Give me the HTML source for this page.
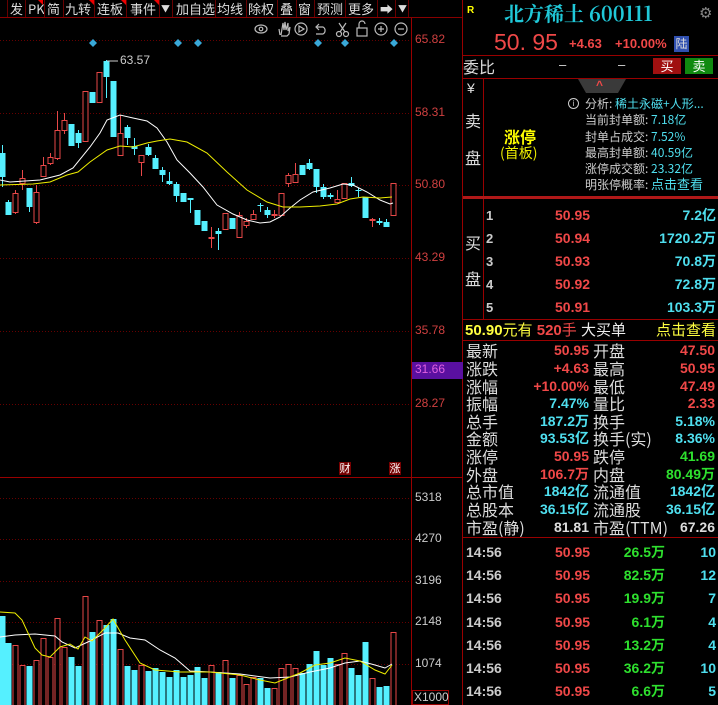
<!DOCTYPE html>
<html><head><meta charset="utf-8"><style>
*{margin:0;padding:0;box-sizing:border-box}
body{width:718px;height:705px;background:#000;overflow:hidden;position:relative;font-family:"Liberation Sans","Noto Sans CJK SC",sans-serif;color:#ddd}
.a{position:absolute;white-space:nowrap}
.tb{position:absolute;top:0;height:18px;font-size:13px;line-height:18px;color:#ddd;font-family:"Noto Sans CJK SC","Liberation Sans",sans-serif}
.sep{position:absolute;top:0;width:1px;height:18px;background:#600}
.tri{position:absolute;top:0;width:0;height:0;border-top:5px solid #e00;border-left:5px solid transparent}
.ax{position:absolute;left:415px;font-size:12px;color:#d04040}
.axw{position:absolute;left:415px;font-size:12px;color:#ccc}
.c{font-family:"Liberation Sans","Noto Sans CJK SC",sans-serif}
.lbl{position:absolute;left:466px;font-size:16px;color:#ddd;font-family:"Noto Sans CJK SC",sans-serif;line-height:18px}
.lbl2{position:absolute;left:593px;font-size:16px;color:#ddd;font-family:"Noto Sans CJK SC",sans-serif;line-height:18px}
.v1{position:absolute;right:129px;font-size:14px;font-weight:bold;line-height:18px}
.v2{position:absolute;right:3px;font-size:14px;font-weight:bold;line-height:18px}
.r{color:#f04848}.cy{color:#4fdfef}.g{color:#2ee02e}.y{color:#ffff40}.w{color:#ddd}
.info{position:absolute;left:585px;font-size:12px;color:#ccc;font-family:"Noto Sans CJK SC",sans-serif;line-height:16px}
</style></head><body>
<div class="sep" style="left:7px"></div>
<div class="tb" style="left:10px">发</div><div class="sep" style="left:25px"></div>
<div class="tb" style="left:28px">PK</div><div class="tri" style="left:38px"></div><div class="sep" style="left:44px"></div>
<div class="tb" style="left:47px">简</div><div class="sep" style="left:63px"></div>
<div class="tb" style="left:65px">九转</div><div class="tri" style="left:89px"></div><div class="sep" style="left:94px"></div>
<div class="tb" style="left:97px">连板</div><div class="tri" style="left:121px"></div><div class="sep" style="left:126px"></div>
<div class="tb" style="left:130px">事件</div><div class="tri" style="left:154px"></div><div class="sep" style="left:159px"></div>
<div class="tb" style="left:161px;font-size:9px">▼</div><div class="sep" style="left:172px"></div>
<div class="tb" style="left:176px">加自选</div><div class="sep" style="left:215px"></div>
<div class="tb" style="left:217px">均线</div><div class="sep" style="left:246px"></div>
<div class="tb" style="left:248px">除权</div><div class="sep" style="left:277px"></div>
<div class="tb" style="left:280px">叠</div><div class="sep" style="left:296px"></div>
<div class="tb" style="left:298px">窗</div><div class="sep" style="left:314px"></div>
<div class="tb" style="left:317px">预测</div><div class="sep" style="left:345px"></div>
<div class="tb" style="left:348px">更多</div><div class="sep" style="left:377px"></div>
<div class="tb" style="left:380px;font-weight:bold">➡</div><div class="sep" style="left:395px"></div>
<div class="tb" style="left:398px;font-size:9px">▼</div><div class="sep" style="left:408px"></div>
<div class="a" style="left:0;top:17px;width:463px;height:1px;background:#800"></div>

<svg class="a" style="left:0;top:0" width="463" height="705">
<g stroke="#600" stroke-dasharray="1,2" stroke-width="1">
<line x1="0" y1="40.5" x2="411" y2="40.5"/><line x1="0" y1="113.5" x2="411" y2="113.5"/><line x1="0" y1="185.5" x2="411" y2="185.5"/><line x1="0" y1="258.5" x2="411" y2="258.5"/><line x1="0" y1="331.5" x2="411" y2="331.5"/><line x1="0" y1="404.5" x2="411" y2="404.5"/>
<line x1="0" y1="498.5" x2="411" y2="498.5"/><line x1="0" y1="539.5" x2="411" y2="539.5"/><line x1="0" y1="581.5" x2="411" y2="581.5"/><line x1="0" y1="622.5" x2="411" y2="622.5"/><line x1="0" y1="664.5" x2="411" y2="664.5"/>
</g>
<line x1="411.5" y1="18" x2="411.5" y2="705" stroke="#900"/>
<line x1="0" y1="477.5" x2="463" y2="477.5" stroke="#900"/>
<line x1="462.5" y1="0" x2="462.5" y2="705" stroke="#900"/>
<g stroke="#bbb" fill="none" stroke-width="1.2">
<ellipse cx="261" cy="29" rx="6" ry="4"/><circle cx="261" cy="29" r="1.8"/>
<path d="M280 35 L279 29 M281 35 L283 23 L284 30 L285 22 L286 30 L288 23 L288 31 L290 27 L289 34 L287 36 L281 36"/>
<circle cx="301" cy="29" r="6"/><path d="M299 26 L304 29 L299 32Z"/>
<path d="M317 27 L323 27 A4 4 0 0 1 323 34 L316 34 M319 24 L316 27 L319 30"/>
<circle cx="339" cy="34" r="2.5"/><circle cx="346" cy="34" r="2.5"/><path d="M340 32 L346 23 M345 32 L339 23"/>
<rect x="357" y="28" width="10" height="8"/><path d="M359 28 L359 24 A3 3 0 0 1 365 24"/>
<circle cx="381" cy="29" r="6"/><path d="M378 29 L384 29 M381 26 L381 32"/>
<circle cx="401" cy="29" r="6"/><path d="M398 29 L404 29"/>
</g>
<g fill="#3aa8d8"><path d="M93 39l4 4-4 4-4-4z"/><path d="M178 39l4 4-4 4-4-4z"/><path d="M198 39l4 4-4 4-4-4z"/><path d="M318 39l4 4-4 4-4-4z"/><path d="M345 39l4 4-4 4-4-4z"/><path d="M394 39l4 4-4 4-4-4z"/></g>
<g id="cd"></g>
<polyline fill="none" stroke="#fff" stroke-width="1" points="0,180 10,182 40,180 60,175 73,168 90,147 100,133 107,120 120,115 133,118 147,121 157,128 167,142 177,160 190,173 203,187 217,205 233,214 247,220 260,223 270,222 280,217 290,208 300,200 313,192 330,188 343,184 353,185 367,192 380,200 390,204 393,203"/>
<polyline fill="none" stroke="#ee0" stroke-width="1" points="0,185 33,184 50,182 67,175 78,172 90,162 107,150 120,146 133,147 147,143 157,141 170,139 187,142 207,153 227,172 247,190 267,202 283,207 300,207 320,206 337,204 350,199 363,197 380,198 392,197"/>
<polyline fill="none" stroke="#fff" stroke-width="1" points="0,637 15,635 35,634 55,636 62,642 75,648 90,641 105,633 118,633 130,638 145,640 160,650 175,658 190,671 210,672 240,674 270,678 290,677 310,672 330,668 345,663 360,661 375,665 385,668 392,664"/>
<polyline fill="none" stroke="#ee0" stroke-width="1" points="0,612 15,613 22,620 35,648 42,655 50,657 60,647 70,644 78,649 85,637 92,641 105,628 113,619 125,640 140,663 155,670 180,672 210,672 240,675 260,680 275,683 300,673 315,665 330,663 345,658 360,661 375,670 385,674 392,665"/>
<line x1="107" y1="61" x2="118" y2="61" stroke="#ccc"/>
</svg>
<div class="a" style="left:120px;top:53px;font-size:12px;color:#ccc">63.57</div>

<div class="ax" style="top:32px">65.82</div>
<div class="ax" style="top:105px">58.31</div>
<div class="ax" style="top:177px">50.80</div>
<div class="ax" style="top:250px">43.29</div>
<div class="ax" style="top:323px">35.78</div>
<div class="a" style="left:412px;top:362px;width:51px;height:17px;background:#5a10a0"></div>
<div class="ax" style="top:362px;color:#e060e0">31.66</div>
<div class="ax" style="top:396px">28.27</div>
<div class="a" style="left:339px;top:462px;width:12px;height:13px;background:#700;color:#fff;font-size:11px;line-height:13px;text-align:center;font-family:'Noto Sans CJK SC'">财</div>
<div class="a" style="left:389px;top:462px;width:12px;height:13px;background:#700;color:#fff;font-size:11px;line-height:13px;text-align:center;font-family:'Noto Sans CJK SC'">涨</div>
<div class="axw" style="top:490px">5318</div>
<div class="axw" style="top:531px">4270</div>
<div class="axw" style="top:573px">3196</div>
<div class="axw" style="top:614px">2148</div>
<div class="axw" style="top:656px">1074</div>
<div class="a" style="left:412px;top:690px;width:37px;height:15px;border:1px solid #900;font-size:12px;color:#ccc;line-height:13px;padding-left:1px">X1000</div>

<div class="a" style="left:467px;top:5px;font-size:10px;font-weight:bold;color:#ff0">R</div>
<div class="a" style="left:504px;top:0px;font-size:20px;line-height:26px;font-weight:bold;color:#20c8d8;font-family:'Noto Serif CJK SC','Liberation Serif',serif">北方稀土 600111</div>
<div class="a" style="left:699px;top:4px;font-size:15px;color:#888">⚙</div>
<div class="a" style="left:494px;top:29px;font-size:23px;color:#f04848;font-family:'Liberation Sans',sans-serif">50. 95</div>
<div class="a" style="left:569px;top:36px;font-size:13px;font-weight:bold;color:#f04848">+4.63</div>
<div class="a" style="left:615px;top:36px;font-size:13px;font-weight:bold;color:#f04848">+10.00%</div>
<div class="a" style="left:674px;top:36px;width:15px;height:16px;background:#3050b0;color:#ddd;font-size:12px;line-height:16px;text-align:center;font-family:'Noto Sans CJK SC'">陆</div>
<div class="a" style="left:463px;top:55px;width:255px;height:1px;background:#900"></div>
<div class="a" style="left:463px;top:56px;font-size:16px;line-height:20px;color:#ddd;font-family:'Noto Sans CJK SC'">委比</div>
<div class="a" style="left:559px;top:57px;font-size:13px">–</div>
<div class="a" style="left:618px;top:57px;font-size:13px">–</div>
<div class="a" style="left:653px;top:58px;width:28px;height:16px;background:#a01010;color:#fff;font-size:13px;line-height:16px;text-align:center;font-family:'Noto Sans CJK SC'">买</div>
<div class="a" style="left:685px;top:58px;width:28px;height:16px;background:#108a10;color:#fff;font-size:13px;line-height:16px;text-align:center;font-family:'Noto Sans CJK SC'">卖</div>
<div class="a" style="left:463px;top:78px;width:255px;height:1px;background:#900"></div>
<div class="a" style="left:483px;top:78px;width:1px;height:242px;background:#900"></div>
<div class="a" style="left:467px;top:80px;font-size:14px;color:#ddd">¥</div>
<div class="a" style="left:465px;top:108px;font-size:16px;color:#ddd;font-family:'Noto Sans CJK SC'">卖</div>
<div class="a" style="left:465px;top:145px;font-size:16px;color:#ddd;font-family:'Noto Sans CJK SC'">盘</div>
<div class="a" style="left:578px;top:79px;width:48px;height:0;border-top:14px solid #3a3a3a;border-left:8px solid transparent;border-right:8px solid transparent"></div>
<div class="a" style="left:596px;top:78px;font-size:12px;color:#f04848;font-weight:bold">^</div>
<div class="a" style="left:504px;top:127px;font-size:16px;line-height:18px;font-weight:bold;color:#ff0;font-family:'Noto Sans CJK SC'">涨停</div>
<div class="a" style="left:500px;top:145px;font-size:14px;line-height:16px;color:#ee0;font-family:'Noto Sans CJK SC'">(首板)</div>
<div class="a" style="left:568px;top:98px;width:11px;height:11px;border:1px solid #ccc;border-radius:50%;font-size:8px;line-height:9px;text-align:center;color:#ccc">i</div>
<div class="info" style="top:96px">分析: <span class="cy">稀土永磁+人形...</span></div>
<div class="info" style="top:112px">当前封单额: <span class="cy">7.18亿</span></div>
<div class="info" style="top:129px">封单占成交: <span class="cy">7.52%</span></div>
<div class="info" style="top:145px">最高封单额: <span class="cy">40.59亿</span></div>
<div class="info" style="top:161px">涨停成交额: <span class="cy">23.32亿</span></div>
<div class="info" style="top:176px">明张停概率: <span class="cy" style="font-size:13px">点击查看</span></div>
<div class="a" style="left:463px;top:196px;width:255px;height:3px;background:#b01818"></div>
<div class="a" style="left:465px;top:230px;font-size:16px;color:#ddd;font-family:'Noto Sans CJK SC'">买</div>
<div class="a" style="left:465px;top:266px;font-size:16px;color:#ddd;font-family:'Noto Sans CJK SC'">盘</div>
<div class="a c" style="left:486px;top:204px;font-size:13px;font-weight:bold;line-height:23px;color:#ccc">1<br>2<br>3<br>4<br>5</div>
<div class="a c r" style="left:555px;top:204px;font-size:14px;font-weight:bold;line-height:23px">50.95<br>50.94<br>50.93<br>50.92<br>50.91</div>
<div class="a c cy" style="right:2px;top:204px;font-size:14px;font-weight:bold;line-height:23px;text-align:right">7.2亿<br>1720.2万<br>70.8万<br>72.8万<br>103.3万</div>
<div class="a" style="left:463px;top:319px;width:255px;height:1px;background:#900"></div>
<div class="a" style="left:465px;top:320px;font-size:15px;line-height:19px;font-family:'Liberation Sans','Noto Sans CJK SC'"><b class="y">50.90</b><span class="y" style="font-family:'Noto Sans CJK SC'">元有</span> <b class="r">520</b><span class="r">手</span> <span style="color:#eee">大买单</span></div>
<div class="a y" style="right:2px;top:320px;font-size:15px;line-height:19px;font-family:'Noto Sans CJK SC'">点击查看</div>
<div class="a" style="left:463px;top:340px;width:255px;height:1px;background:#900"></div>

<div class="lbl" style="top:341px">最新</div><div class="v1 r" style="top:341px">50.95</div><div class="lbl2" style="top:341px">开盘</div><div class="v2 r" style="top:341px">47.50</div>
<div class="lbl" style="top:359px">涨跌</div><div class="v1 r" style="top:359px">+4.63</div><div class="lbl2" style="top:359px">最高</div><div class="v2 r" style="top:359px">50.95</div>
<div class="lbl" style="top:377px">涨幅</div><div class="v1 r" style="top:377px">+10.00%</div><div class="lbl2" style="top:377px">最低</div><div class="v2 r" style="top:377px">47.49</div>
<div class="lbl" style="top:394px">振幅</div><div class="v1 cy" style="top:394px">7.47%</div><div class="lbl2" style="top:394px">量比</div><div class="v2 r" style="top:394px">2.33</div>
<div class="lbl" style="top:412px">总手</div><div class="v1 cy" style="top:412px">187.2万</div><div class="lbl2" style="top:412px">换手</div><div class="v2 cy" style="top:412px">5.18%</div>
<div class="lbl" style="top:429px">金额</div><div class="v1 cy" style="top:429px">93.53亿</div><div class="lbl2" style="top:429px">换手(实)</div><div class="v2 cy" style="top:429px">8.36%</div>
<div class="lbl" style="top:447px">涨停</div><div class="v1 r" style="top:447px">50.95</div><div class="lbl2" style="top:447px">跌停</div><div class="v2 g" style="top:447px">41.69</div>
<div class="lbl" style="top:465px">外盘</div><div class="v1 r" style="top:465px">106.7万</div><div class="lbl2" style="top:465px">内盘</div><div class="v2 g" style="top:465px">80.49万</div>
<div class="lbl" style="top:482px">总市值</div><div class="v1 cy" style="top:482px">1842亿</div><div class="lbl2" style="top:482px">流通值</div><div class="v2 cy" style="top:482px">1842亿</div>
<div class="lbl" style="top:500px">总股本</div><div class="v1 cy" style="top:500px">36.15亿</div><div class="lbl2" style="top:500px">流通股</div><div class="v2 cy" style="top:500px">36.15亿</div>
<div class="lbl" style="top:518px">市盈(静)</div><div class="v1 w" style="top:518px">81.81</div><div class="lbl2" style="top:518px">市盈(TTM)</div><div class="v2 w" style="top:518px">67.26</div>
<div class="a" style="left:463px;top:537px;width:255px;height:1px;background:#900"></div>
<div class="a c" style="left:466px;top:541px;font-size:14px;font-weight:bold;line-height:23.2px;color:#ccc">14:56<br>14:56<br>14:56<br>14:56<br>14:56<br>14:56<br>14:56</div>
<div class="a c r" style="left:555px;top:541px;font-size:14px;font-weight:bold;line-height:23.2px">50.95<br>50.95<br>50.95<br>50.95<br>50.95<br>50.95<br>50.95</div>
<div class="a c g" style="right:53px;top:541px;font-size:14px;font-weight:bold;line-height:23.2px;text-align:right">26.5万<br>82.5万<br>19.9万<br>6.1万<br>13.2万<br>36.2万<br>6.6万</div>
<div class="a c cy" style="right:2px;top:541px;font-size:14px;font-weight:bold;line-height:23.2px;text-align:right">10<br>12<br>7<br>4<br>4<br>10<br>5</div>

<script>
var C=[[2,0,153,177,145,187],[8,0,202,215,200,215],[15,1,193,212,190,214],[22,1,178,183,170,190],[29,0,188,207,188,212],[36,1,192,222,185,224],[43,1,165,176,157,177],[50,1,157,163,153,165],[57,1,130,158,111,160],[64,1,120,130,113,134],[71,0,124,146,124,146],[78,0,133,143,130,148],[85,1,91,141,91,141],[92,0,92,103,92,103],[99,1,72,102,72,102],[106,0,61,77,60,98],[113,0,81,137,81,137],[120,1,133,155,115,155],[127,0,127,138,125,145],[134,0,146,149,138,155],[141,1,155,162,155,176],[148,0,147,155,144,156],[155,0,158,169,155,169],[162,0,170,175,167,182],[169,0,181,184,172,185],[176,0,184,196,182,202],[183,0,193,202,193,202],[190,0,198,200,198,213],[197,0,210,225,210,225],[204,0,221,231,221,231],[211,1,237,238,227,248],[218,0,231,234,228,250],[225,1,213,229,213,229],[232,0,218,229,218,229],[239,1,215,237,212,237],[246,1,221,225,218,228],[253,1,214,219,210,220],[260,0,205,206,203,212],[267,0,210,215,207,218],[274,1,214,215,210,218],[281,1,193,215,193,215],[288,1,175,183,173,187],[295,1,174,182,163,182],[302,0,165,175,165,175],[309,0,163,169,159,170],[316,0,169,187,169,193],[323,0,187,197,184,199],[330,0,195,197,193,199],[337,1,199,202,190,202],[344,1,183,198,183,198],[351,0,183,186,177,187],[358,0,190,191,188,197],[365,0,197,218,197,218],[372,1,219,220,218,227],[379,0,221,223,218,225],[386,0,222,227,219,227],[393,1,183,215,183,215]];
var V=[616,643,645,665,666,660,638,657,618,647,657,666,596,632,620,625,619,649,666,670,665,671,668,672,677,670,677,675,667,678,665,672,660,678,675,684,677,678,688,688,668,664,668,673,664,651,665,658,664,653,668,675,642,678,687,686,632];
var s='',R='#e84848',Y='#55f0ff';
C.forEach(function(c,i){var x=c[0],col=c[1]?R:Y,h=Math.max(1,c[3]-c[2]);
s+='<line x1="'+(x+.5)+'" y1="'+c[4]+'" x2="'+(x+.5)+'" y2="'+c[5]+'" stroke="'+col+'"/>';
if(c[1])s+='<rect x="'+(x-2)+'" y="'+(c[2]+.5)+'" width="5" height="'+h+'" fill="#000" stroke="'+col+'"/>';
else s+='<rect x="'+(x-2.5)+'" y="'+c[2]+'" width="6" height="'+h+'" fill="'+col+'"/>';
var t=V[i];
if(c[1])s+='<rect x="'+(x-2)+'" y="'+(t+.5)+'" width="5" height="'+(705-t)+'" fill="#000" stroke="'+col+'"/>';
else s+='<rect x="'+(x-2.5)+'" y="'+t+'" width="6" height="'+(705-t)+'" fill="'+col+'"/>';});
document.getElementById('cd').innerHTML=s;
</script>
</body></html>
